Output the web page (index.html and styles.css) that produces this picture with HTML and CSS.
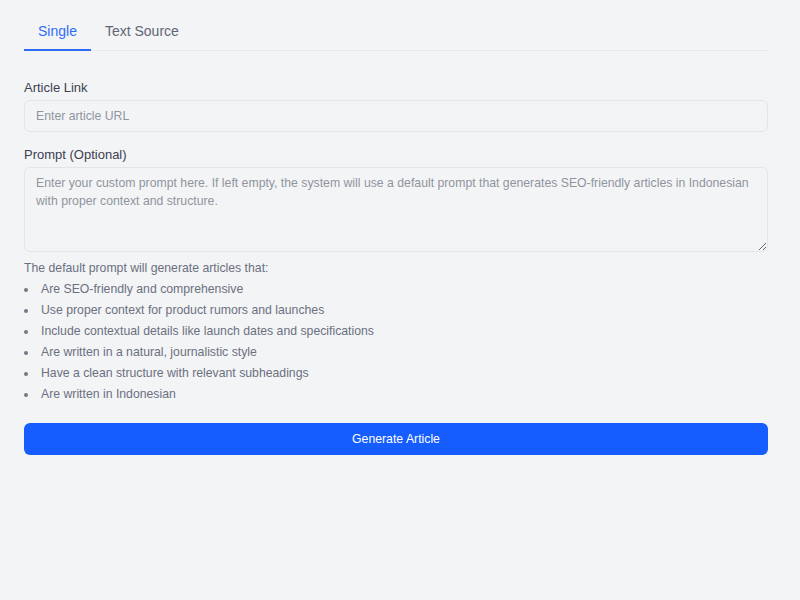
FILE: index.html
```html
<!DOCTYPE html>
<html lang="en">
<head>
<meta charset="utf-8">
<title>Generate Article</title>
<link rel="stylesheet" href="styles.css">
</head>
<body>
<div class="page">
  <div class="tabs">
    <div class="tab active">Single</div>
    <div class="tab">Text Source</div>
  </div>
  <form class="form">
    <div class="field">
      <label class="label" for="url">Article Link</label>
      <input id="url" class="input" type="text" placeholder="Enter article URL">
    </div>
    <div class="field">
      <label class="label" for="prompt">Prompt (Optional)</label>
      <textarea id="prompt" class="textarea" placeholder="Enter your custom prompt here. If left empty, the system will use a default prompt that generates SEO-friendly articles in Indonesian with proper context and structure."></textarea>
    </div>
    <p class="hint">The default prompt will generate articles that:</p>
    <ul class="list">
      <li>Are SEO-friendly and comprehensive</li>
      <li>Use proper context for product rumors and launches</li>
      <li>Include contextual details like launch dates and specifications</li>
      <li>Are written in a natural, journalistic style</li>
      <li>Have a clean structure with relevant subheadings</li>
      <li>Are written in Indonesian</li>
    </ul>
    <button type="button" class="btn">Generate Article</button>
  </form>
</div>
</body>
</html>
```
FILE: styles.css
```css
* { box-sizing: border-box; }
html, body {
  margin: 0;
  padding: 0;
  background: #f3f4f6;
  font-family: "Liberation Sans", Arial, sans-serif;
}
.page {
  width: 792px;
  padding: 12px 24px;
}
.tabs {
  display: flex;
  border-bottom: 1px solid #e7e8ec;
}
.tab {
  position: relative;
  padding: 9px 14px;
  font-size: 14px;
  line-height: 20px;
  color: #5f6675;
}
.tab.active {
  color: #2f6cf6;
}
.tab.active::after {
  content: "";
  position: absolute;
  left: 0;
  right: 0;
  bottom: -1px;
  height: 2px;
  background: #2f6cf6;
}
.form {
  margin: 28px 0 0;
}
.field {
  margin-bottom: 14px;
}
.label {
  display: block;
  font-size: 13px;
  line-height: 18px;
  color: #3b4150;
  margin-bottom: 3px;
}
.input,
.textarea {
  display: block;
  width: 100%;
  margin: 0;
  border: 1px solid #e3e5e9;
  border-radius: 6px;
  background: #f3f4f6;
  font-family: "Liberation Sans", Arial, sans-serif;
  font-size: 12.25px;
  color: #374151;
  outline: none;
}
.input {
  height: 32px;
  padding: 0 11px;
}
.textarea {
  height: 85px;
  padding: 7px 11px;
  line-height: 17.5px;
  resize: vertical;
}
.input::placeholder,
.textarea::placeholder {
  color: #8f949d;
}
.field:nth-child(2) {
  margin-bottom: 0;
}
.hint {
  margin: 6px 0 0;
  font-size: 12.25px;
  line-height: 21px;
  color: #6b7080;
}
.list {
  list-style: none;
  margin: 0;
  padding: 0;
}
.list li {
  display: flex;
  align-items: center;
  font-size: 12.25px;
  line-height: 21px;
  color: #6b7080;
}
.list li::before {
  content: "";
  flex: none;
  width: 4px;
  height: 4px;
  border-radius: 50%;
  background: #737987;
  margin-right: 13px;
}
.btn {
  display: block;
  width: 100%;
  height: 32px;
  margin-top: 18px;
  border: none;
  border-radius: 6px;
  background: #165dff;
  color: #ffffff;
  font-family: "Liberation Sans", Arial, sans-serif;
  font-size: 12.25px;
  cursor: pointer;
}
```
